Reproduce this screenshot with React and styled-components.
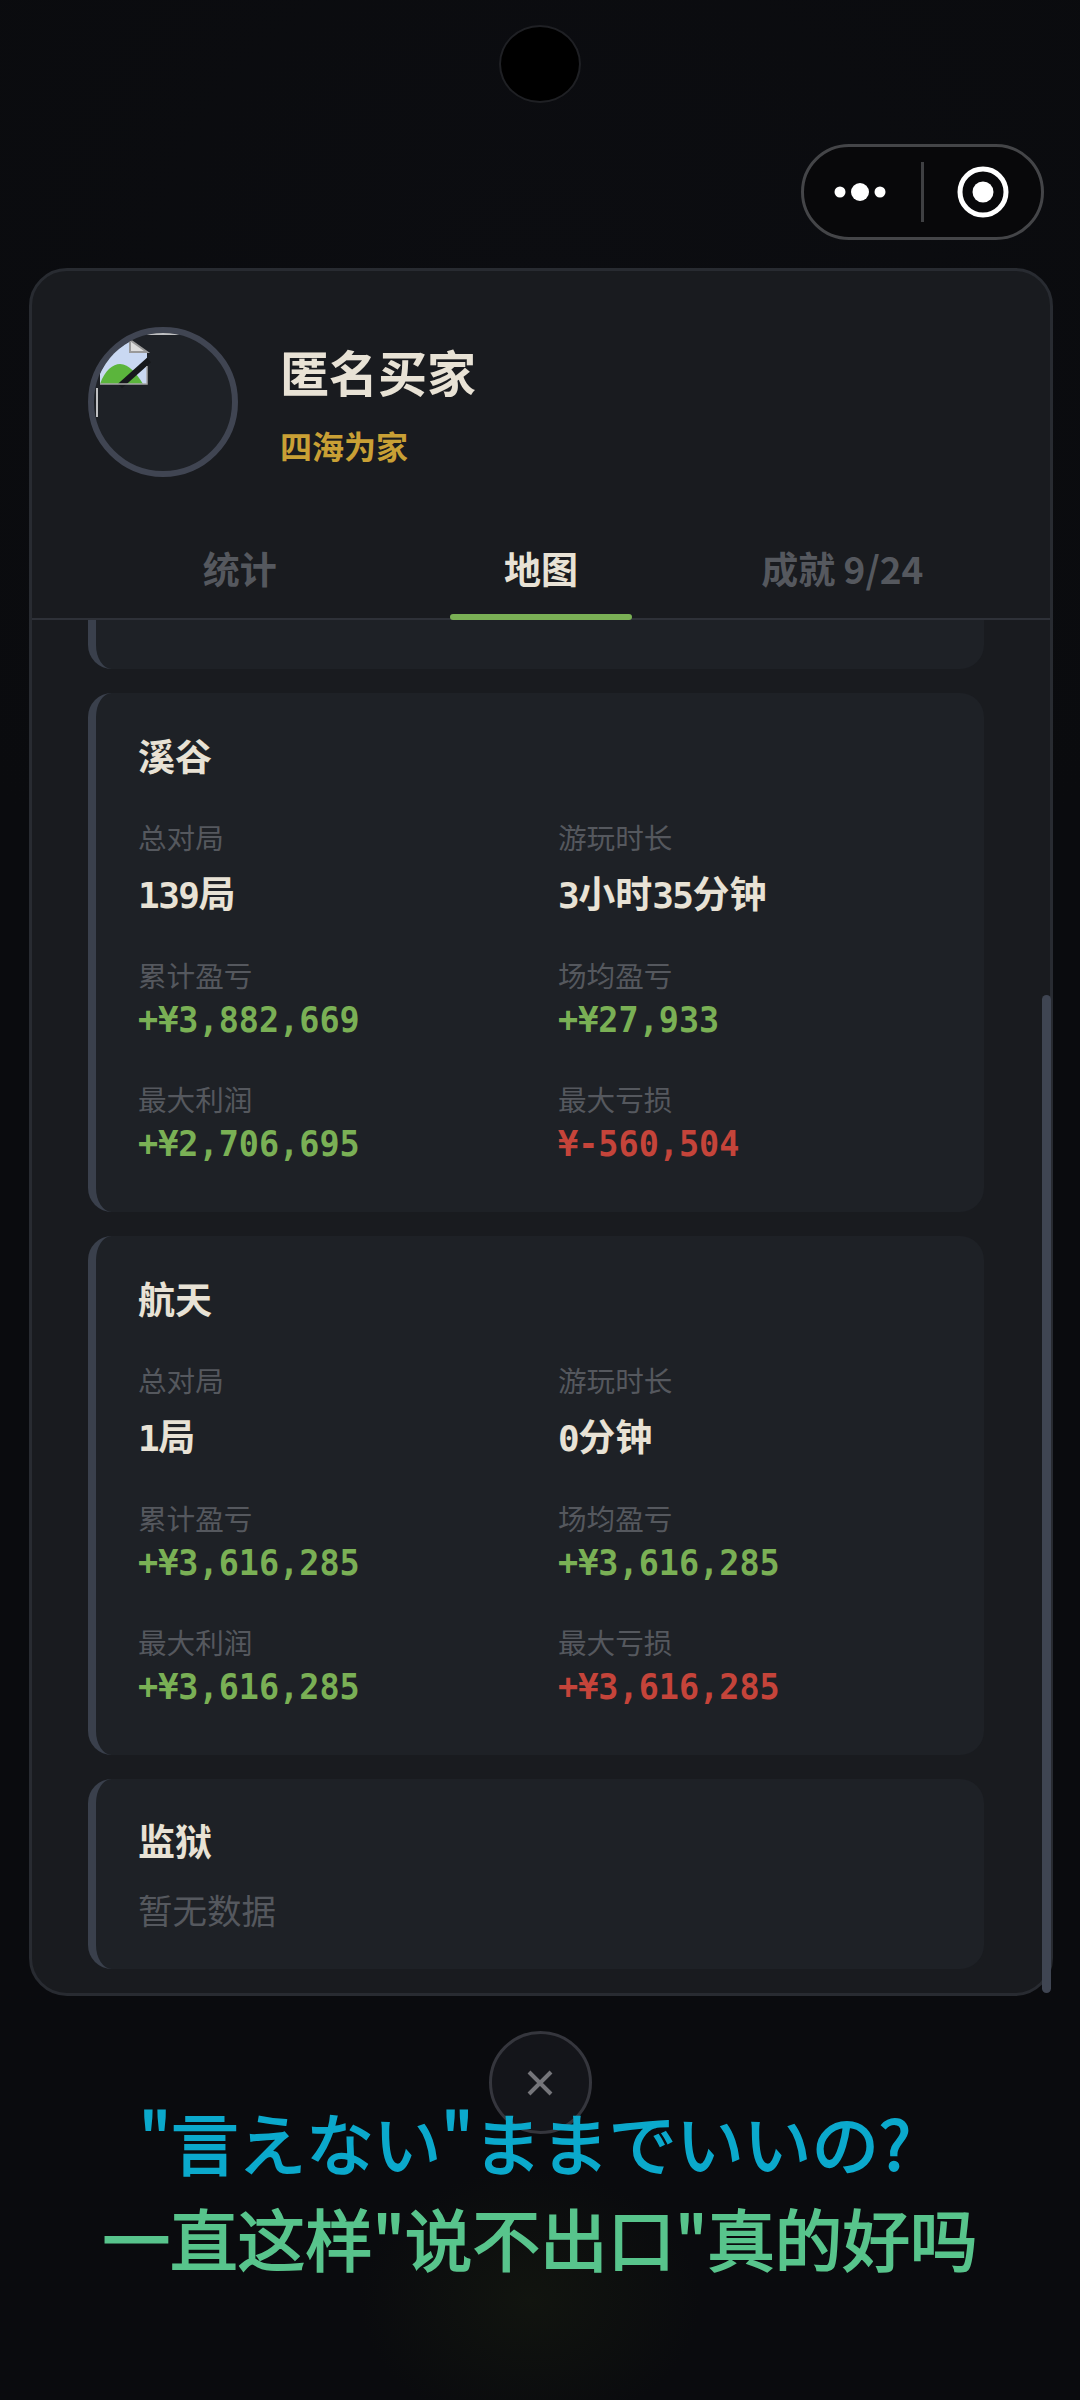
import React from "react";
import styled, { createGlobalStyle } from "styled-components";

const GlobalStyle = createGlobalStyle`
  html, body {
    margin: 0;
    padding: 0;
    background: #0b0c10;
  }
  * { box-sizing: border-box; }
`;

const CJK = `"Noto Sans CJK SC", "Noto Sans", sans-serif`;
const MONO = `"DejaVu Sans Mono", "Noto Sans CJK SC", monospace`;

const Page = styled.div`
  position: relative;
  width: 1080px;
  height: 2400px;
  overflow: hidden;
  display: flex;
  flex-direction: column;
  font-family: ${CJK};
  background:
    radial-gradient(ellipse 170px 130px at 530px 2300px, #11140f 0%, rgba(17, 20, 15, 0) 100%),
    radial-gradient(ellipse 760px 700px at 540px 300px, #0c0d11 0%, #0a0b0e 100%);
`;

const Notch = styled.div`
  width: 82px;
  height: 78px;
  margin: 25px auto 0;
  border-radius: 50%;
  background: #000;
  border: 2px solid #1f2024;
  flex-shrink: 0;
`;

const CapsuleRow = styled.div`
  display: flex;
  justify-content: flex-end;
  padding: 41px 36px 0 0;
`;

const Capsule = styled.div`
  width: 243px;
  height: 96px;
  display: flex;
  align-items: center;
  border: 3px solid #444548;
  border-radius: 48px;
  background: #08080a;
`;

const CapsuleSide = styled.div`
  flex: 1;
  height: 100%;
  display: flex;
  align-items: center;
  justify-content: center;
`;

const CapsuleLine = styled.div`
  width: 3px;
  height: 60px;
  background: #3f4043;
`;

const Panel = styled.section`
  position: relative;
  width: 1024px;
  height: 1728px;
  margin: 28px 0 0 29px;
  flex-shrink: 0;
  display: flex;
  flex-direction: column;
  background: #191b1f;
  border: 3px solid #282b31;
  border-radius: 38px;
`;

const Header = styled.header`
  display: flex;
  align-items: center;
  gap: 42px;
  padding: 56px 0 0 56px;
`;

const Avatar = styled.div`
  position: relative;
  width: 150px;
  height: 150px;
  border-radius: 50%;
  border: 6px solid #404552;
  background: #1e2126;
  overflow: hidden;
  flex-shrink: 0;
`;

const BrokenImage = styled.svg`
  position: absolute;
  left: -1px;
  top: -1px;
`;

const UserInfo = styled.div`
  display: flex;
  flex-direction: column;
  gap: 19px;
`;

const UserName = styled.div`
  font-size: 49px;
  line-height: 66px;
  font-weight: 700;
  color: #e8e2d5;
`;

const UserTitle = styled.div`
  font-size: 32px;
  line-height: 44px;
  font-weight: 700;
  color: #c9a035;
`;

const Tabs = styled.nav`
  display: flex;
  margin-top: 53px;
  padding: 0 57px;
  height: 90px;
  border-bottom: 2px solid #2e3138;
  flex-shrink: 0;
`;

const Tab = styled.div`
  position: relative;
  flex: 1;
  display: flex;
  align-items: flex-start;
  justify-content: center;
  padding-top: 12px;
  font-size: 37px;
  line-height: 52px;
  font-weight: 700;
  color: ${(p) => (p.$active ? "#e8e2d5" : "#55585e")};

  ${(p) =>
    p.$active &&
    `
    &::after {
      content: "";
      position: absolute;
      left: 60px;
      right: 60px;
      bottom: -2px;
      height: 6px;
      border-radius: 3px;
      background: #7ab055;
    }
  `}
`;

const List = styled.div`
  flex: 1;
  min-height: 0;
  display: flex;
  flex-direction: column;
  gap: 24px;
  padding: 0 66px 0 56px;
  overflow: hidden;
`;

const Card = styled.article`
  flex-shrink: 0;
  padding: 39px 0 0 42px;
  background: #1e2126;
  border-left: 8px solid #3a404c;
  border-radius: 24px;
`;

const CutCard = styled(Card)`
  height: 49px;
  padding: 0;
  border-top-left-radius: 0;
  border-top-right-radius: 0;
`;

const StatsCard = styled(Card)`
  height: 519px;
`;

const EmptyCard = styled(Card)`
  height: 190px;
  padding-top: 38px;
`;

const CardTitle = styled.h3`
  margin: 0;
  font-size: 37px;
  line-height: 46px;
  font-weight: 700;
  color: #e8e2d5;
`;

const Grid = styled.div`
  display: grid;
  grid-template-columns: 384px 384px;
  gap: 0 36px;
  margin-top: 39px;
`;

const Stat = styled.div`
  height: ${(p) => p.$h}px;
`;

const Label = styled.div`
  font-size: 28.6px;
  line-height: 40px;
  color: #55585e;
`;

const Value = styled.div`
  margin-top: 1px;
  font-family: ${MONO};
  font-size: 36px;
  line-height: 48px;
  font-weight: 700;
  color: ${(p) => p.$color};
  white-space: nowrap;
  transform: scaleX(0.93);
  transform-origin: left center;
`;

const Count = styled.div`
  margin-top: 11px;
  font-family: ${MONO};
  font-size: 36px;
  line-height: 48px;
  font-weight: 700;
  letter-spacing: -1.5px;
  color: #e8e2d5;
  white-space: nowrap;
`;

const Unit = styled.span`
  font-family: ${CJK};
  font-size: 37px;
  letter-spacing: 0;
`;

const Empty = styled.div`
  margin-top: 21px;
  font-size: 34.5px;
  line-height: 50px;
  color: #55585e;
`;

const ScrollThumb = styled.div`
  position: absolute;
  right: -1px;
  top: 724px;
  bottom: 0;
  width: 9px;
  border-radius: 5px;
  background: #3f4552;
`;

const CloseButton = styled.button`
  width: 103px;
  height: 103px;
  margin: 35px auto 0;
  padding: 0;
  flex-shrink: 0;
  display: flex;
  align-items: center;
  justify-content: center;
  border-radius: 50%;
  border: 3px solid #35363d;
  background: #14151a;
`;

const Subtitle = styled.div`
  position: absolute;
  left: 0;
  right: 0;
  top: 2093px;
  text-align: center;
  font-size: 67.6px;
  line-height: 96px;
  font-weight: 400;
  -webkit-text-stroke: 1.8px currentColor;
`;

const SubLine = styled.div`
  color: ${(p) => p.$color};
  padding-right: ${(p) => p.$shift || 0}px;
  white-space: nowrap;
`;

const GREEN = "#7ab055";
const RED = "#c5443a";

const maps = [
  {
    name: "溪谷",
    rounds: "139局",
    time: "3小时35分钟",
    total: "+¥3,882,669",
    avg: "+¥27,933",
    best: "+¥2,706,695",
    worst: "¥-560,504",
  },
  {
    name: "航天",
    rounds: "1局",
    time: "0分钟",
    total: "+¥3,616,285",
    avg: "+¥3,616,285",
    best: "+¥3,616,285",
    worst: "+¥3,616,285",
  },
];

// digits stay in the mono font, the units are wider
const withUnits = (text) =>
  text.split(/(\D+)/).map((part, i) => (i % 2 ? <Unit key={i}>{part}</Unit> : part));

const MapCard = ({ m }) => (
  <StatsCard>
    <CardTitle>{m.name}</CardTitle>
    <Grid>
      <Stat $h={138}>
        <Label>总对局</Label>
        <Count>{withUnits(m.rounds)}</Count>
      </Stat>
      <Stat $h={138}>
        <Label>游玩时长</Label>
        <Count>{withUnits(m.time)}</Count>
      </Stat>
      <Stat $h={124}>
        <Label>累计盈亏</Label>
        <Value $color={GREEN}>{m.total}</Value>
      </Stat>
      <Stat $h={124}>
        <Label>场均盈亏</Label>
        <Value $color={GREEN}>{m.avg}</Value>
      </Stat>
      <Stat $h={100}>
        <Label>最大利润</Label>
        <Value $color={GREEN}>{m.best}</Value>
      </Stat>
      <Stat $h={100}>
        <Label>最大亏损</Label>
        <Value $color={RED}>{m.worst}</Value>
      </Stat>
    </Grid>
  </StatsCard>
);

export default function App() {
  return (
    <Page>
      <GlobalStyle />
      <Notch />
      <CapsuleRow>
        <Capsule>
          <CapsuleSide>
            <svg width="54" height="20" viewBox="0 0 54 20" style={{ marginRight: 5 }}>
              <circle cx="7" cy="10" r="5.5" fill="#fff" />
              <circle cx="27" cy="10" r="9" fill="#fff" />
              <circle cx="47" cy="10" r="5.5" fill="#fff" />
            </svg>
          </CapsuleSide>
          <CapsuleLine />
          <CapsuleSide>
            <svg width="52" height="52" viewBox="0 0 52 52">
              <circle cx="26" cy="26" r="23" fill="none" stroke="#fff" strokeWidth="5" />
              <circle cx="26" cy="26" r="10.5" fill="#fff" />
            </svg>
          </CapsuleSide>
        </Capsule>
      </CapsuleRow>
      <Panel>
        <Header>
          <Avatar>
            <BrokenImage width="140" height="140" viewBox="0 0 140 140">
              <path d="M7 8H37L54 20V52H7Z" fill="#c9d8f2" />
              <path d="M7 52C12 38 20 32 27 32C36 32 44 42 50 52Z" fill="#5bb53c" />
              <path d="M27 54L56 28" stroke="#16181b" strokeWidth="6" />
              <path d="M37 8V20H54Z" fill="#dcdcdc" stroke="#999" strokeWidth="2" />
              <path d="M7 52H54V34" fill="none" stroke="#a8a8a8" strokeWidth="1.5" />
              <path d="M52 2H89" stroke="#bfc0c2" strokeWidth="2" />
              <path d="M4 56V85" stroke="#bfc0c2" strokeWidth="2" />
            </BrokenImage>
          </Avatar>
          <UserInfo>
            <UserName>匿名买家</UserName>
            <UserTitle>四海为家</UserTitle>
          </UserInfo>
        </Header>
        <Tabs>
          <Tab>统计</Tab>
          <Tab $active>地图</Tab>
          <Tab>成就 9/24</Tab>
        </Tabs>
        <List>
          <CutCard />
          {maps.map((m) => (
            <MapCard key={m.name} m={m} />
          ))}
          <EmptyCard>
            <CardTitle>监狱</CardTitle>
            <Empty>暂无数据</Empty>
          </EmptyCard>
        </List>
        <ScrollThumb />
      </Panel>
      <CloseButton>
        <svg width="30" height="30" viewBox="0 0 30 30">
          <path d="M4 4L26 26M26 4L4 26" stroke="#75757a" strokeWidth="4" />
        </svg>
      </CloseButton>
      <Subtitle>
        <SubLine $color="#0ba9cc" $shift={30} lang="ja">"言えない"ままでいいの?</SubLine>
        <SubLine $color="#58c48c">一直这样"说不出口"真的好吗</SubLine>
      </Subtitle>
    </Page>
  );
}
